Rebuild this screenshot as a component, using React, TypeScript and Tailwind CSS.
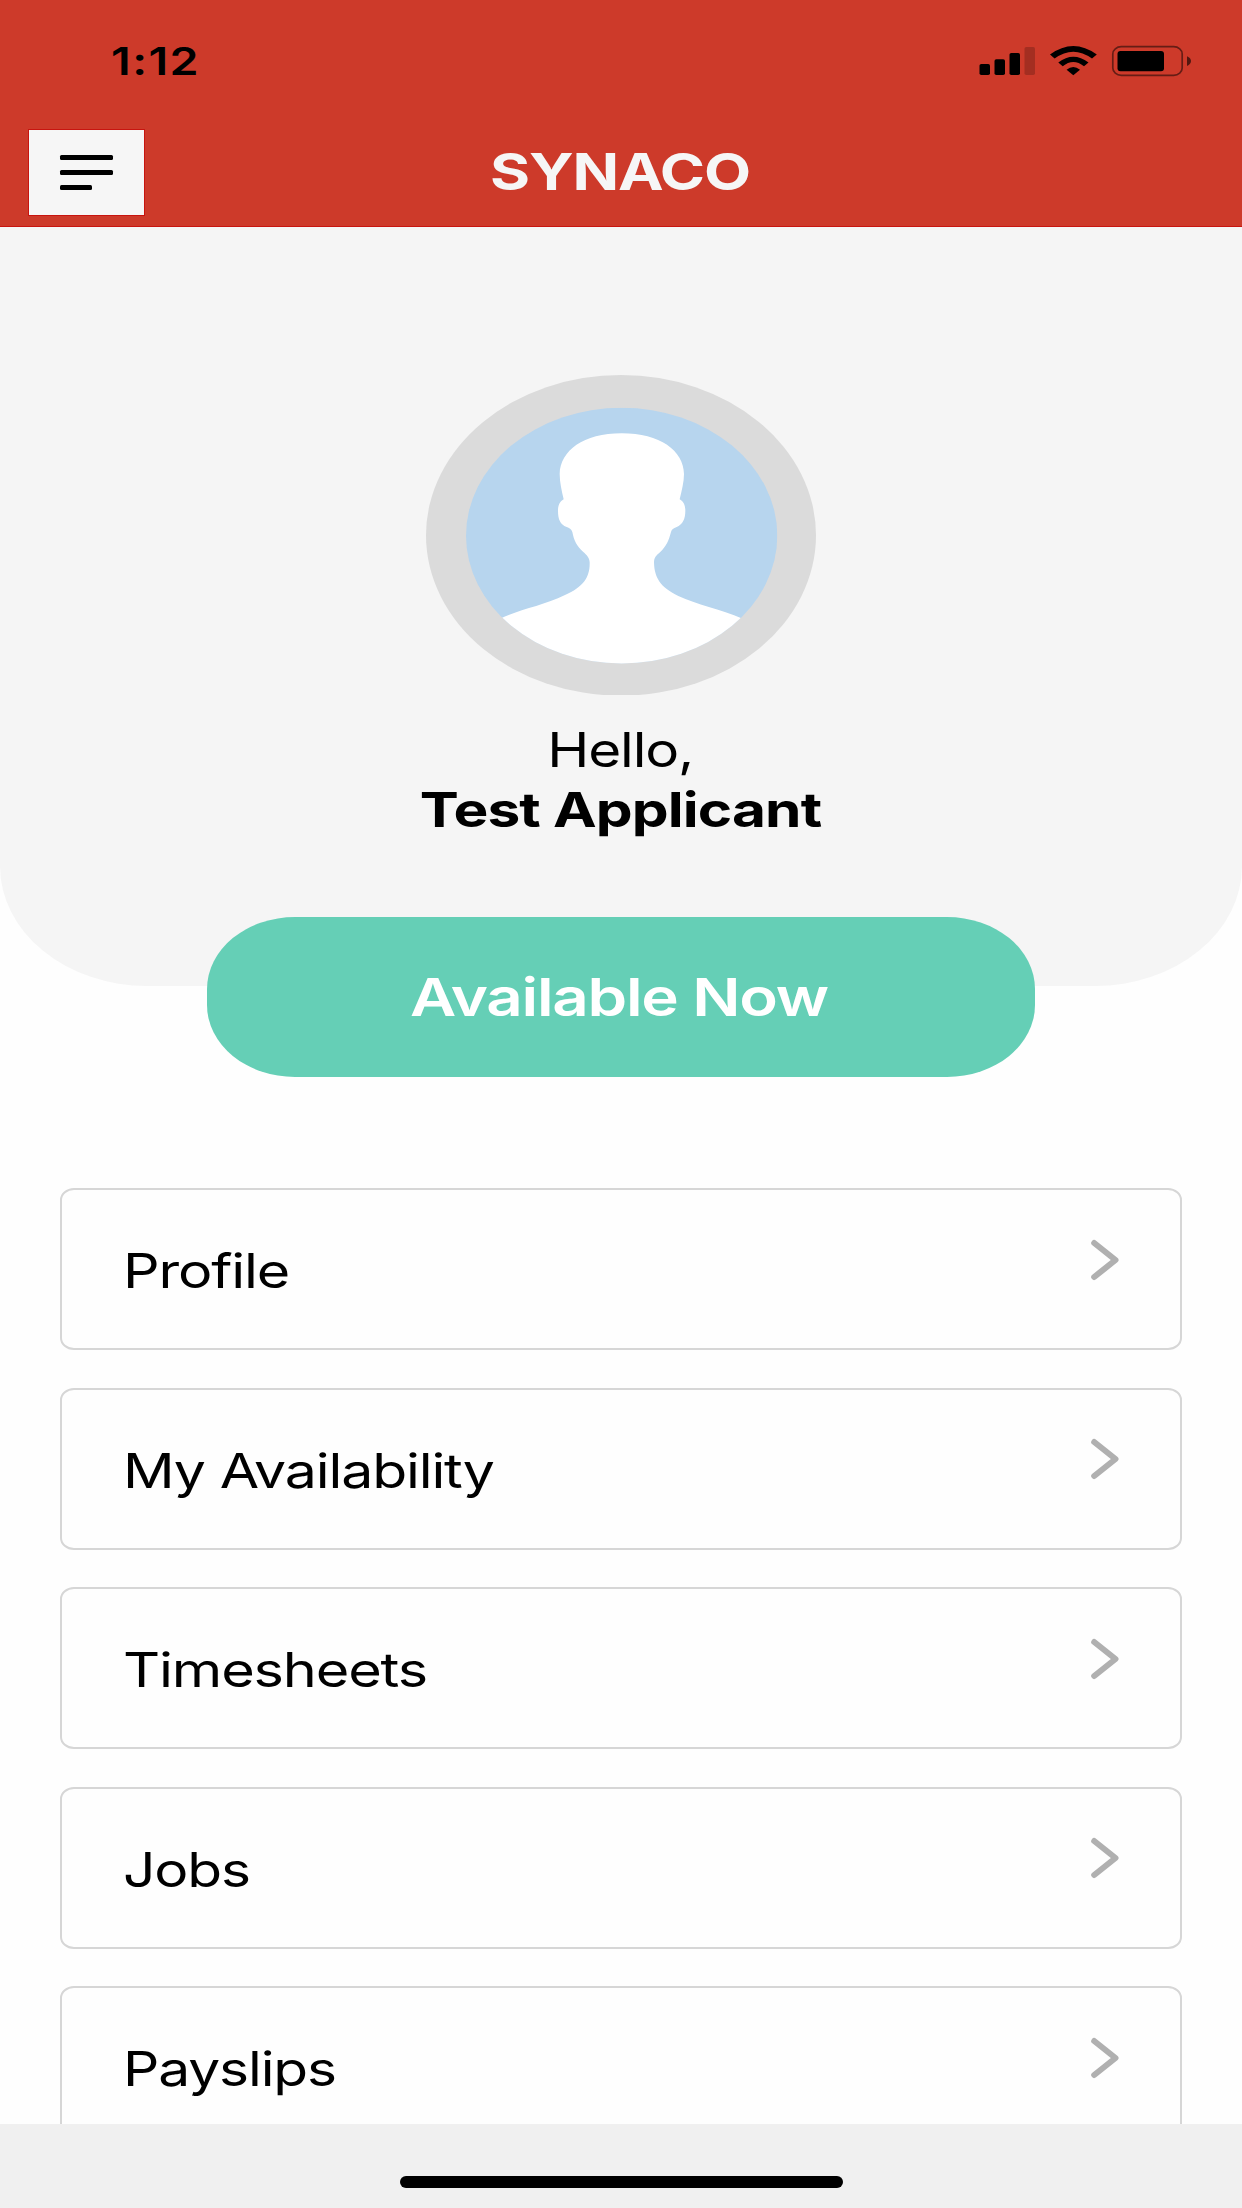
import React from "react";

const menuItems = [
  { label: "Profile", stretch: "scale-x-[1.195]" },
  { label: "My Availability", stretch: "scale-x-[1.191]" },
  { label: "Timesheets", stretch: "scale-x-[1.2]" },
  { label: "Jobs", stretch: "scale-x-[1.186]" },
  { label: "Payslips", stretch: "scale-x-[1.186]" },
];

function StatusIcons() {
  return (
    <svg className="h-[42px] w-[230px]" viewBox="970 40 230 42" aria-hidden="true">
      <rect x="979.5" y="64" width="10.5" height="11" rx="1.8" />
      <rect x="994.5" y="59.3" width="10.5" height="15.7" rx="1.8" />
      <rect x="1009.5" y="53" width="10.5" height="22" rx="1.8" />
      <rect x="1024.5" y="47" width="10.5" height="28" rx="1.8" fillOpacity="0.2" />
      <path d="M1050 54.5Q1073.3 37.5 1096.8 54.5L1092 58.5Q1073.3 44.8 1054.6 58.5Z" />
      <path d="M1058.3 62.5Q1073.3 51 1088.5 62.5L1084 66.3Q1073.3 57.8 1062.7 66.3Z" />
      <path d="M1066.6 69.8Q1073.3 64 1080 69.8L1073.3 75.3Z" />
      <rect x="1112.8" y="46.7" width="69.4" height="28.6" rx="8.5" ry="7.2" fill="none" stroke="#000" strokeWidth="1.7" strokeOpacity="0.5" />
      <rect x="1117.5" y="51" width="46.5" height="20.2" rx="3" />
      <path d="M1187 56.2Q1191 58 1191 61Q1191 64 1187 66Z" fillOpacity="0.6" />
    </svg>
  );
}

function Avatar() {
  return (
    <svg className="h-[320.7px] w-[390px] shrink-0" viewBox="48 43 1170 962" role="img" aria-label="Avatar">
      <defs>
        <clipPath id="face">
          <ellipse cx="635" cy="525" rx="467" ry="383.5" />
        </clipPath>
      </defs>
      <ellipse cx="633" cy="524" rx="585" ry="481" fill="#dbdbdb" />
      <g clipPath="url(#face)">
        <rect x="168" y="141" width="934" height="768" fill="#b7d5ee" />
        <path
          fill="#fff"
          d="M270 774C330 745 400 735 465 703C520 678 540 650 539 605C538 590 530 583 520 574C500 555 492 540 487 514C484 505 478 502 470 499C450 491 444 475 444 450C444 435 448 424 461 416C455 390 449 365 449 340C451 270 520 218 635 218C750 218 821 270 822 340C822 365 815 390 809 416C822 424 826 435 826 450C826 475 818 491 800 499C790 503 785 506 783 514C776 540 770 555 750 575C738 585 732 592 732 605C733 650 750 680 805 706C860 732 930 745 998 774L1000 920L270 920Z"
        />
      </g>
    </svg>
  );
}

function Chevron() {
  return (
    <svg className="mb-[19px] h-[44px] w-[34px]" viewBox="0 0 34 44" fill="none" aria-hidden="true">
      <path d="M6.2 5L27.5 22L6.2 39" stroke="#b0b0b0" strokeWidth="6" strokeLinecap="round" strokeLinejoin="round" />
    </svg>
  );
}

export default function App() {
  return (
    <div className="flex h-[2208px] w-[1242px] flex-col overflow-hidden bg-[#fefefe] font-['Inter','Liberation_Sans',sans-serif] text-black">
      <header className="h-[227px] shrink-0 border-b border-[#c8140f] bg-[#cd3a2a]">
        <div className="flex h-[122px] items-center justify-between pl-[111px] pr-[42px]">
          <span className="origin-left scale-x-[1.21] text-[38.5px] font-semibold leading-none tracking-[1.2px]">1:12</span>
          <StatusIcons />
        </div>
        <div className="grid h-[101px] grid-cols-[117px_1fr_117px] items-center pl-[28px] pr-[30px]">
          <button className="flex h-[87px] w-[117px] items-center border border-[#c8140f] bg-[#f6f6f6] pl-[31px]" aria-label="Menu">
            <span className="flex flex-col gap-[10.5px]">
              <span className="h-[4.5px] w-[52.5px] rounded-[1.5px] bg-black" />
              <span className="h-[4.5px] w-[52.5px] rounded-[1.5px] bg-black" />
              <span className="h-[4.5px] w-[32px] rounded-[1.5px] bg-black" />
            </span>
          </button>
          <h1 className="-translate-y-px scale-x-[1.2] text-center text-[51px] font-bold leading-none tracking-[-1px] text-[#f6f6f6]">SYNACO</h1>
        </div>
      </header>

      <section className="flex h-[758.5px] shrink-0 flex-col items-center rounded-b-[147px_120px] bg-[#f5f5f5] pt-[147.5px]">
        <Avatar />
        <p className="mt-[25.3px] -translate-x-px scale-x-[1.192] text-[47.5px] leading-[60px] tracking-[-0.95px]">Hello,</p>
        <p className="scale-x-[1.22] text-[48px] font-bold leading-[59px] tracking-[-0.72px]">Test Applicant</p>
        <button className="mt-[77.5px] flex h-[160px] w-[828px] shrink-0 items-center justify-center rounded-[88px/72px] bg-[#65cfb6]">
          <span className="-translate-x-[1.5px] scale-x-[1.211] text-[52.5px] font-semibold leading-none tracking-[-1.05px] text-white">Available Now</span>
        </button>
      </section>

      <nav className="flex min-h-0 flex-1 flex-col gap-[37.6px] overflow-hidden px-[60px] pt-[202.5px]">
        {menuItems.map(({ label, stretch }) => (
          <a key={label} className="flex h-[162px] shrink-0 items-center justify-between rounded-[14px/12px] border-2 border-[#d6d6d6] pl-[60.5px] pr-[58.5px]">
            <span className={`origin-left translate-y-[1.5px] text-[48px] leading-none tracking-[-0.96px] ${stretch}`}>{label}</span>
            <Chevron />
          </a>
        ))}
      </nav>

      <footer className="flex h-[84px] shrink-0 justify-center bg-[#f0f0f0] pt-[52px]">
        <div className="h-[12px] w-[443px] rounded-full bg-black" />
      </footer>
    </div>
  );
}
